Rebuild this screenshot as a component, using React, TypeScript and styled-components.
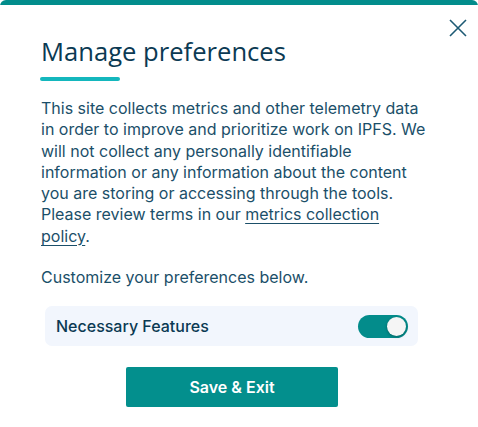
import styled, { createGlobalStyle } from 'styled-components';

const GlobalStyle = createGlobalStyle`
    html, body {
        margin: 0;
        padding: 0;
        background: #ffffff;
    }
    * {
        box-sizing: border-box;
    }
`;

export default function App() {
    return (
        <>
            <GlobalStyle />
            <Modal>
                <TopBar />
                <CloseButton aria-label="Close">
                    <svg width="18" height="18" viewBox="0 0 18 18">
                        <path
                            d="M1 1 L17 17 M17 1 L1 17"
                            stroke="#1d5a74"
                            strokeWidth="1.6"
                            fill="none"
                        />
                    </svg>
                </CloseButton>
                <Content>
                    <Title>Manage preferences</Title>
                    <TitleAccent />
                    <Paragraph>
                        This site collects metrics and other telemetry data in
                        order to improve and prioritize work on IPFS. We will not
                        collect any personally identifiable information or any
                        information about the content you are storing or
                        accessing through the tools. Please review terms in our{' '}
                        <PolicyLink href="#">metrics collection policy</PolicyLink>.
                    </Paragraph>
                    <Paragraph>Customize your preferences below.</Paragraph>
                    <PreferenceRow>
                        <PreferenceLabel>Necessary Features</PreferenceLabel>
                        <Toggle $on>
                            <Knob />
                        </Toggle>
                    </PreferenceRow>
                    <Actions>
                        <SaveButton>Save &amp; Exit</SaveButton>
                    </Actions>
                </Content>
            </Modal>
        </>
    );
}

const Modal = styled.div`
    position: relative;
    width: 478px;
    height: 427px;
    background: #ffffff;
    border-radius: 6px;
    overflow: hidden;
`;

const TopBar = styled.div`
    height: 5px;
    background: #028d8c;
`;

const CloseButton = styled.button`
    position: absolute;
    top: 19px;
    right: 11px;
    width: 18px;
    height: 18px;
    padding: 0;
    border: none;
    background: transparent;
    cursor: pointer;
    display: flex;
`;

const Content = styled.div`
    padding: 30px 49px 0 41px;
    display: flex;
    flex-direction: column;
`;

const Title = styled.h2`
    margin: 0;
    font-family: 'Open Sans', sans-serif;
    font-weight: 400;
    font-size: 25.6px;
    line-height: 34px;
    color: #0b3a53;
`;

const TitleAccent = styled.div`
    width: 80px;
    height: 4px;
    margin: 8px 0 17px -1px;
    border-radius: 2px;
    background: #14b7bd;
`;

const Paragraph = styled.p`
    margin: 0 0 20px;
    font-family: Inter, sans-serif;
    font-size: 16px;
    line-height: 21.3px;
    color: #1b4f69;
`;

const PolicyLink = styled.a`
    color: #1b4f69;
    text-decoration: underline;
    text-underline-offset: 3px;
`;

const PreferenceRow = styled.div`
    display: flex;
    align-items: center;
    justify-content: space-between;
    height: 40px;
    margin: -2px 0 0 4px;
    width: 373px;
    padding: 0 10px 0 11px;
    border-radius: 7px;
    background: #f2f6fd;
`;

const PreferenceLabel = styled.span`
    font-family: Inter, sans-serif;
    font-weight: 500;
    font-size: 16px;
    color: #0b3a53;
`;

const Toggle = styled.div<{ $on?: boolean }>`
    width: 50px;
    height: 23px;
    border-radius: 12px;
    padding: 2px;
    display: flex;
    justify-content: ${({ $on }) => ($on ? 'flex-end' : 'flex-start')};
    background: ${({ $on }) => ($on ? '#038c8b' : '#c9d1d9')};
`;

const Knob = styled.div`
    width: 19px;
    height: 19px;
    border-radius: 50%;
    background: #f5f5f5;
    box-shadow: 0 1px 3px rgba(0, 0, 0, 0.3);
`;

const Actions = styled.div`
    display: flex;
    justify-content: center;
    margin-top: 21px;
    padding-right: 6px;
`;

const SaveButton = styled.button`
    width: 212px;
    height: 40px;
    border: none;
    border-radius: 2px;
    background: #038f8d;
    color: #ffffff;
    font-family: Inter, sans-serif;
    font-weight: 600;
    font-size: 16px;
    cursor: pointer;
`;
